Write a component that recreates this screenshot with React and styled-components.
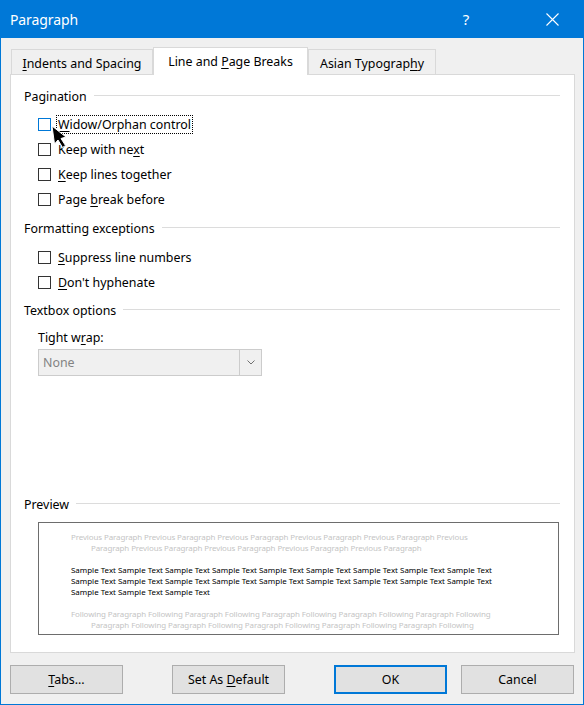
import React from 'react';
import styled, { createGlobalStyle } from 'styled-components';

const Global = createGlobalStyle`
  html, body { margin: 0; padding: 0; background: #f0f0f0; }
  body {
    font-family: "Segoe UI", "Noto Sans", "Open Sans", sans-serif;
    font-size: 12.4px;
    color: #000;
  }
`;

const Window = styled.div`
  position: relative;
  width: 584px;
  height: 705px;
  box-sizing: border-box;
  border: 1px solid #0078d7;
  border-top: none;
  background: #f0f0f0;
  display: flex;
  flex-direction: column;
`;

const TitleBar = styled.div`
  height: 38px;
  flex: none;
  background: #0078d7;
  display: flex;
  align-items: center;
  padding-left: 9px;
  color: #fff;
`;

const Title = styled.div`
  flex: 1;
  font-size: 14px;
  letter-spacing: -0.1px;
`;

const CaptionButton = styled.div`
  width: 46px;
  height: 38px;
  display: flex;
  align-items: center;
  justify-content: center;
  margin-right: ${p => p.$mr}px;
  font-size: 15px;
  color: #fff;
`;

const TabBar = styled.div`
  display: flex;
  align-items: flex-end;
  height: 28px;
  margin: 9px 0 -1px 10px;
  position: relative;
  z-index: 1;
  flex: none;
`;

const Tab = styled.div`
  width: ${p => p.$w}px;
  height: ${p => (p.$active ? 28 : 25)}px;
  margin-bottom: ${p => (p.$active ? 0 : 1)}px;
  box-sizing: border-box;
  border: 1px solid #d9d9d9;
  border-bottom: none;
  background: ${p => (p.$active ? '#fff' : '#f0f0f0')};
  display: flex;
  align-items: center;
  justify-content: center;
  padding-top: ${p => (p.$active ? 0 : 3)}px;
  white-space: pre;
`;

const Panel = styled.div`
  flex: 1;
  margin-left: 9px;
  width: 565px;
  box-sizing: border-box;
  background: #fff;
  border: 1px solid #d9d9d9;
  padding: 14px 14px 17px 13px;
  display: flex;
  flex-direction: column;
`;

const SectionHeader = styled.div`
  display: flex;
  height: 16px;
  line-height: 16px;
  margin-top: ${p => p.$mt || 0}px;
  white-space: nowrap;
  &::after {
    content: "";
    flex: 1;
    height: 1px;
    background: #dcdcdc;
    margin: 6px 0 0 7px;
  }
`;

const Group = styled.div`
  margin-top: ${p => p.$mt}px;
  display: flex;
  flex-direction: column;
`;

const CheckRow = styled.label`
  height: 25px;
  display: flex;
  align-items: center;
  padding-left: 14px;
`;

const Box = styled.span`
  width: 13px;
  height: 13px;
  box-sizing: border-box;
  border: 1px solid ${p => (p.$hover ? '#0078d7' : '#333')};
  background: #fff;
  margin-right: 5px;
  flex: none;
`;

const CheckText = styled.span`
  border: 1px dotted ${p => (p.$focus ? '#000' : 'transparent')};
  padding: 1px 1px 1px 1px;
  line-height: 15px;
  white-space: nowrap;
`;

const Key = styled.span`
  text-decoration: underline;
  text-underline-offset: 2px;
`;

const FieldLabel = styled.div`
  margin-top: 11px;
  padding-left: 14px;
  height: 16px;
  line-height: 16px;
`;

const Select = styled.div`
  margin: 3px 0 0 14px;
  width: 224px;
  height: 27px;
  box-sizing: border-box;
  border: 1px solid #cccccc;
  background: #f0f0f0;
  display: flex;
  align-items: stretch;
  color: #838383;
`;

const SelectValue = styled.div`
  flex: 1;
  display: flex;
  align-items: center;
  padding-left: 4px;
`;

const SelectArrow = styled.div`
  width: 21px;
  border-left: 1px solid #cccccc;
  display: flex;
  align-items: center;
  justify-content: center;
`;

const Spacer = styled.div`
  flex: 1;
`;

const PreviewBox = styled.div`
  margin: 9px 0 0 14px;
  width: 521px;
  height: 113px;
  box-sizing: border-box;
  border: 1px solid #6d6d6d;
  background: #fff;
  padding: 9px 0 0 32px;
  font-family: "Noto Sans", "Open Sans", sans-serif;
  font-size: 7.95px;
  line-height: 11px;
`;

const PreviewPara = styled.div`
  color: ${p => (p.$dim ? '#c4c4c4' : '#000')};
  margin-top: ${p => p.$mt || 0}px;
  letter-spacing: ${p => (p.$dim ? -0.1 : 0)}px;
`;

const PreviewLine = styled.div`
  white-space: nowrap;
  padding-left: ${p => (p.$indent ? 20 : 0)}px;
`;

const Footer = styled.div`
  display: flex;
  flex: none;
  padding: 12px 0 10px 9px;
`;

const Button = styled.div`
  width: 113px;
  height: 29px;
  box-sizing: border-box;
  margin-left: ${p => p.$ml || 0}px;
  background: #e1e1e1;
  border: ${p => (p.$default ? '2px solid #0078d7' : '1px solid #adadad')};
  display: flex;
  align-items: center;
  justify-content: center;
  white-space: pre;
`;

const Cursor = styled.svg`
  position: absolute;
  left: 50px;
  top: 125px;
  width: 18px;
  height: 24px;
`;

const check = (content, opts = {}) => (
  <CheckRow>
    <Box $hover={opts.hover} />
    <CheckText $focus={opts.focus}>{content}</CheckText>
  </CheckRow>
);

export default function App() {
  return (
    <>
      <Global />
      <Window>
        <TitleBar>
          <Title>Paragraph</Title>
          <CaptionButton $mr={40}>?</CaptionButton>
          <CaptionButton $mr={8}>
            <svg width="13" height="13" viewBox="0 0 13 13">
              <path d="M0.5 0.5 L12.5 12.5 M12.5 0.5 L0.5 12.5" stroke="#fff" strokeWidth="1.1" fill="none" />
            </svg>
          </CaptionButton>
        </TitleBar>

        <TabBar>
          <Tab $w={142}><span><Key>I</Key>ndents and Spacing</span></Tab>
          <Tab $w={155} $active><span>Line and <Key>P</Key>age Breaks</span></Tab>
          <Tab $w={128}><span>Asian Typograp<Key>h</Key>y</span></Tab>
        </TabBar>

        <Panel>
          <SectionHeader>Pagination</SectionHeader>
          <Group $mt={7}>
            {check(<><Key>W</Key>idow/Orphan control</>, { hover: true, focus: true })}
            {check(<>Keep with ne<Key>x</Key>t</>)}
            {check(<><Key>K</Key>eep lines together</>)}
            {check(<>Page <Key>b</Key>reak before</>)}
          </Group>

          <SectionHeader $mt={9}>Formatting exceptions</SectionHeader>
          <Group $mt={8}>
            {check(<><Key>S</Key>uppress line numbers</>)}
            {check(<><Key>D</Key>on't hyphenate</>)}
          </Group>

          <SectionHeader $mt={8}>Textbox options</SectionHeader>
          <FieldLabel>Tight w<Key>r</Key>ap:</FieldLabel>
          <Select>
            <SelectValue>None</SelectValue>
            <SelectArrow>
              <svg width="8" height="5" viewBox="0 0 8 5">
                <polyline points="0.5,0.5 4,4 7.5,0.5" fill="none" stroke="#707070" strokeWidth="1" />
              </svg>
            </SelectArrow>
          </Select>

          <Spacer />

          <SectionHeader>Preview</SectionHeader>
          <PreviewBox>
            <PreviewPara $dim>
              <PreviewLine>Previous Paragraph Previous Paragraph Previous Paragraph Previous Paragraph Previous Paragraph Previous</PreviewLine>
              <PreviewLine $indent>Paragraph Previous Paragraph Previous Paragraph Previous Paragraph Previous Paragraph</PreviewLine>
            </PreviewPara>
            <PreviewPara $mt={11}>
              <PreviewLine>Sample Text Sample Text Sample Text Sample Text Sample Text Sample Text Sample Text Sample Text Sample Text</PreviewLine>
              <PreviewLine>Sample Text Sample Text Sample Text Sample Text Sample Text Sample Text Sample Text Sample Text Sample Text</PreviewLine>
              <PreviewLine>Sample Text Sample Text Sample Text</PreviewLine>
            </PreviewPara>
            <PreviewPara $dim $mt={11}>
              <PreviewLine>Following Paragraph Following Paragraph Following Paragraph Following Paragraph Following Paragraph Following</PreviewLine>
              <PreviewLine $indent>Paragraph Following Paragraph Following Paragraph Following Paragraph Following Paragraph Following</PreviewLine>
            </PreviewPara>
          </PreviewBox>
        </Panel>

        <Footer>
          <Button><span><Key>T</Key>abs...</span></Button>
          <Button $ml={49}><span>Set As <Key>D</Key>efault</span></Button>
          <Button $ml={49} $default>OK</Button>
          <Button $ml={14}>Cancel</Button>
        </Footer>

        <Cursor viewBox="0 0 18 24">
          <path d="M1 1 L3.5 19 L7 15 L11.5 22.5 L14.5 20.5 L10 13.5 L15 12 Z" fill="#000" stroke="#fff" strokeWidth="1" strokeLinejoin="miter" />
        </Cursor>
      </Window>
    </>
  );
}
